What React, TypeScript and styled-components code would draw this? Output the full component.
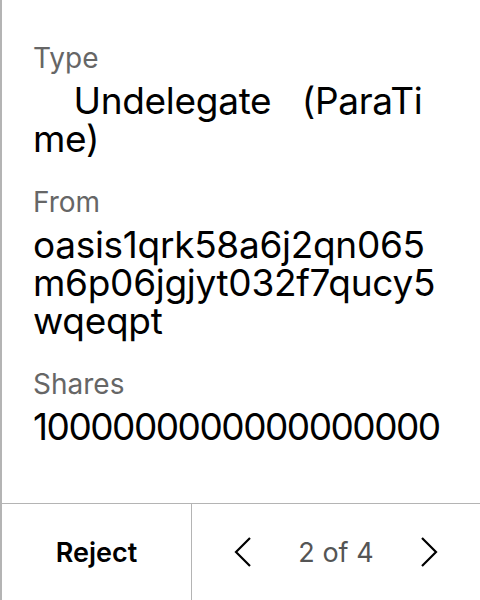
import styled, { createGlobalStyle } from "styled-components";

const GlobalStyle = createGlobalStyle`
  html, body {
    margin: 0;
    padding: 0;
    background: #ffffff;
  }
  body {
    font-family: Inter, "Noto Sans", sans-serif;
  }
`;

const Screen = styled.div`
  width: 480px;
  height: 600px;
  box-sizing: border-box;
  border-left: 2px solid #b4b4b4;
  display: flex;
  flex-direction: column;
  background: #fff;
`;

const Content = styled.div`
  flex: 1;
  padding: 43px 33px 0 31px;
  display: flex;
  flex-direction: column;
  gap: 29px;
`;

const Field = styled.div`
  display: flex;
  flex-direction: column;
  gap: 9px;
`;

const Label = styled.div`
  font-size: 28px;
  line-height: 30px;
  color: #666666;
`;

const Value = styled.div<{ $numeric?: boolean }>`
  font-size: 37px;
  line-height: 38px;
  color: #000;
  white-space: pre-wrap;
  word-break: break-all;
  letter-spacing: ${(p) => (p.$numeric ? "-1.5px" : "-0.3px")};
`;

const Footer = styled.div`
  height: 96px;
  border-top: 1px solid #b4b4b4;
  display: flex;
`;

const RejectButton = styled.button`
  width: 190px;
  border: none;
  border-right: 1px solid #b4b4b4;
  background: none;
  font-family: inherit;
  font-size: 27px;
  font-weight: 600;
  color: #000;
  padding: 0;
`;

const Pager = styled.div`
  flex: 1;
  display: flex;
  align-items: center;
  justify-content: space-between;
  padding: 0 42px 0 42px;
`;

const PageText = styled.span`
  font-size: 27px;
  color: #555555;
`;

const Chevron = ({ dir }: { dir: "left" | "right" }) => (
  <svg width="18" height="32" viewBox="0 0 18 32" fill="none">
    <path
      d={dir === "left" ? "M16 2 L2 16 L16 30" : "M2 2 L16 16 L2 30"}
      stroke="#000"
      strokeWidth="2.2"
    />
  </svg>
);

export default function App() {
  return (
    <>
      <GlobalStyle />
      <Screen>
        <Content>
          <Field>
            <Label>Type</Label>
            <Value>{"    Undelegate   (ParaTime)"}</Value>
          </Field>
          <Field>
            <Label>From</Label>
            <Value>oasis1qrk58a6j2qn065m6p06jgjyt032f7qucy5wqeqpt</Value>
          </Field>
          <Field>
            <Label>Shares</Label>
            <Value $numeric>1000000000000000000</Value>
          </Field>
        </Content>
        <Footer>
          <RejectButton>Reject</RejectButton>
          <Pager>
            <Chevron dir="left" />
            <PageText>2 of 4</PageText>
            <Chevron dir="right" />
          </Pager>
        </Footer>
      </Screen>
    </>
  );
}
